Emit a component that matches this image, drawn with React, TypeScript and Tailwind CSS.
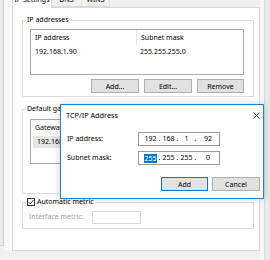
import React from 'react'

// Advanced TCP/IP Settings (IP Settings tab) with the "TCP/IP Address" dialog on top

function WinButton({ label, primary = false, className = '' }: { label: string; primary?: boolean; className?: string }) {
	return (
		<div
			className={`h-[14px] flex items-center justify-center bg-[#e1e1e1] border leading-none ${primary ? 'border-[#0078d7]' : 'border-[#adadad]'} ${className}`}
		>
			{label}
		</div>
	)
}

function GroupBox({ legend, children, className = '' }: { legend: React.ReactNode; children: React.ReactNode; className?: string }) {
	return (
		<fieldset className={`border border-[#dcdcdc] ml-[9px] mr-[5px] ${className}`}>
			<legend className="ml-[3px] px-[1px] leading-[10px] h-[10px]">{legend}</legend>
			{children}
		</fieldset>
	)
}

function ListView({ cols, rows, selected = false, className = '' }: { cols: string[]; rows: string[][]; selected?: boolean; className?: string }) {
	return (
		<div className={`border border-[#a9a9a9] bg-white ${className}`}>
			<div className="flex h-[16px] items-center">
				{cols.map((c, i) => (
					<div key={c} className={`h-full flex items-center pl-[4px] ${i === 0 ? 'w-[106px] border-r border-[#e5e5e5]' : 'flex-1 pl-[3px]'}`}>
						{c}
					</div>
				))}
			</div>
			{rows.map((r, ri) => (
				<div key={ri} className={`flex h-[12px] items-center ${selected ? 'bg-[#e5e5e5] mx-[2px]' : ''}`}>
					{r.map((cell, i) => (
						<div key={i} className={i === 0 ? 'w-[106px] pl-[4px]' : 'flex-1 pl-[3px]'}>
							{cell}
						</div>
					))}
				</div>
			))}
		</div>
	)
}

function IpBox({ parts, highlightFirst = false }: { parts: string[]; highlightFirst?: boolean }) {
	return (
		<div className="w-[82px] h-[14px] border border-[#9a9a9a] bg-white flex items-center pl-[4px]">
			{parts.map((p, i) => (
				<React.Fragment key={i}>
					<div className={`${i === 3 ? 'flex-1' : 'w-[15px]'} flex justify-center`}>
						{i === 0 && highlightFirst ? <span className="bg-[#0078d7] text-white leading-[9px]">{p}</span> : p}
					</div>
					{i < 3 && <span className="w-[3px] flex justify-center">.</span>}
				</React.Fragment>
			))}
		</div>
	)
}

export default function App() {
	return (
		<div className="relative w-[270px] h-[260px] overflow-hidden bg-[#f0f0f0] flex font-['Noto_Sans',sans-serif] text-[7px] text-black">
			{/* back window edge */}
			<div className="w-[4px] h-[246px] bg-[#ebebeb] border-r border-b border-[#d0d0d0]" />
			<div className="w-[8px] h-[251px] bg-[#f8f8f8]" />

			{/* property sheet */}
			<div className="w-[248px] flex flex-col h-[251px]">
				{/* tabs, scrolled off the top */}
				<div className="h-[7px] flex items-end relative z-10">
					<div className="w-[40px] h-[12px] -mb-[1px] bg-white border-x border-[#d9d9d9] flex items-start justify-center leading-[7px]">
						IP Settings
					</div>
					<div className="w-[30px] h-[11px] bg-[#f0f0f0] border-r border-b border-[#d9d9d9] flex items-start justify-center leading-[7px]">
						DNS
					</div>
					<div className="w-[28px] h-[11px] bg-[#f0f0f0] border-r border-b border-[#d9d9d9] flex items-start justify-center leading-[7px]">
						WINS
					</div>
				</div>

				{/* tab page */}
				<div className="flex-1 bg-white border border-[#d9d9d9] flex flex-col">
					<GroupBox legend="IP addresses" className="mt-[7px]">
						<div className="pl-[7px] pr-[9px] pt-[4px] pb-[3px]">
							<ListView className="h-[46px]" cols={['IP address', 'Subnet mask']} rows={[['192.168.1.90', '255.255.255.0']]} />
							<div className="flex justify-end gap-[5px] mt-[4px]">
								<WinButton label="Add..." className="w-[48px]" />
								<WinButton label="Edit..." className="w-[48px]" />
								<WinButton label="Remove" className="w-[47px]" />
							</div>
						</div>
					</GroupBox>

					<GroupBox legend="Default gateways:" className="mt-[7px]">
						<div className="pl-[7px] pr-[9px] pt-[5px] pb-[11px]">
							<ListView className="h-[45px]" selected cols={['Gateway', 'Metric']} rows={[['192.168.1.1', 'Automatic']]} />
							<div className="flex justify-end gap-[5px] mt-[4px]">
								<WinButton label="Add..." className="w-[48px]" />
								<WinButton label="Edit..." className="w-[48px]" />
								<WinButton label="Remove" className="w-[47px]" />
							</div>
						</div>
					</GroupBox>

					<GroupBox
						className="mt-[3px]"
						legend={
							<span className="flex items-center gap-[2px]">
								<span className="w-[8px] h-[8px] border border-[#333] bg-white flex items-center justify-center">
									<svg width="6" height="6" viewBox="0 0 6 6" fill="none">
										<path d="M0.6 3.1 L2.3 4.8 L5.4 1" stroke="#222" strokeWidth="0.9" />
									</svg>
								</span>
								Automatic metric
							</span>
						}
					>
						<div className="flex items-center pl-[6px] pt-[4px] pb-[4px]">
							<div className="w-[63px] text-[#a0a0a0]">Interface metric:</div>
							<div className="w-[49px] h-[13px] border border-[#d9d9d9] bg-white" />
						</div>
					</GroupBox>
				</div>
			</div>

			<div className="w-[5px] h-full bg-[#f6f6f6] border-r border-[#dadada]" />
			<div className="flex-1 bg-[#e9e9e9]" />

			{/* TCP/IP Address dialog */}
			<div className="absolute left-[60px] top-[104px] w-[204px] h-[95px] border border-[#1883d7] bg-white flex flex-col shadow-[0_0_8px_rgba(0,0,0,0.18)] z-20">
				<div className="h-[20px] flex items-center justify-between pl-[5px] pr-[3px] text-[7.3px]">
					<span>TCP/IP Address</span>
					<svg width="7" height="7" viewBox="0 0 7 7" fill="none">
						<path d="M0.5 0.5 L6.5 6.5 M6.5 0.5 L0.5 6.5" stroke="#222" strokeWidth="0.8" />
					</svg>
				</div>
				<div className="flex-1 flex flex-col pl-[6px] pr-[3px] pt-[7px]">
					<div className="flex items-center">
						<div className="w-[71px]">IP address:</div>
						<IpBox parts={['192', '168', '1', '92']} />
					</div>
					<div className="flex items-center mt-[5px]">
						<div className="w-[71px]">Subnet mask:</div>
						<IpBox parts={['255', '255', '255', '0']} highlightFirst />
					</div>
					<div className="flex justify-end gap-[4px] mt-[12px]">
						<WinButton label="Add" primary className="w-[47px]" />
						<WinButton label="Cancel" className="w-[48px]" />
					</div>
				</div>
			</div>
		</div>
	)
}
